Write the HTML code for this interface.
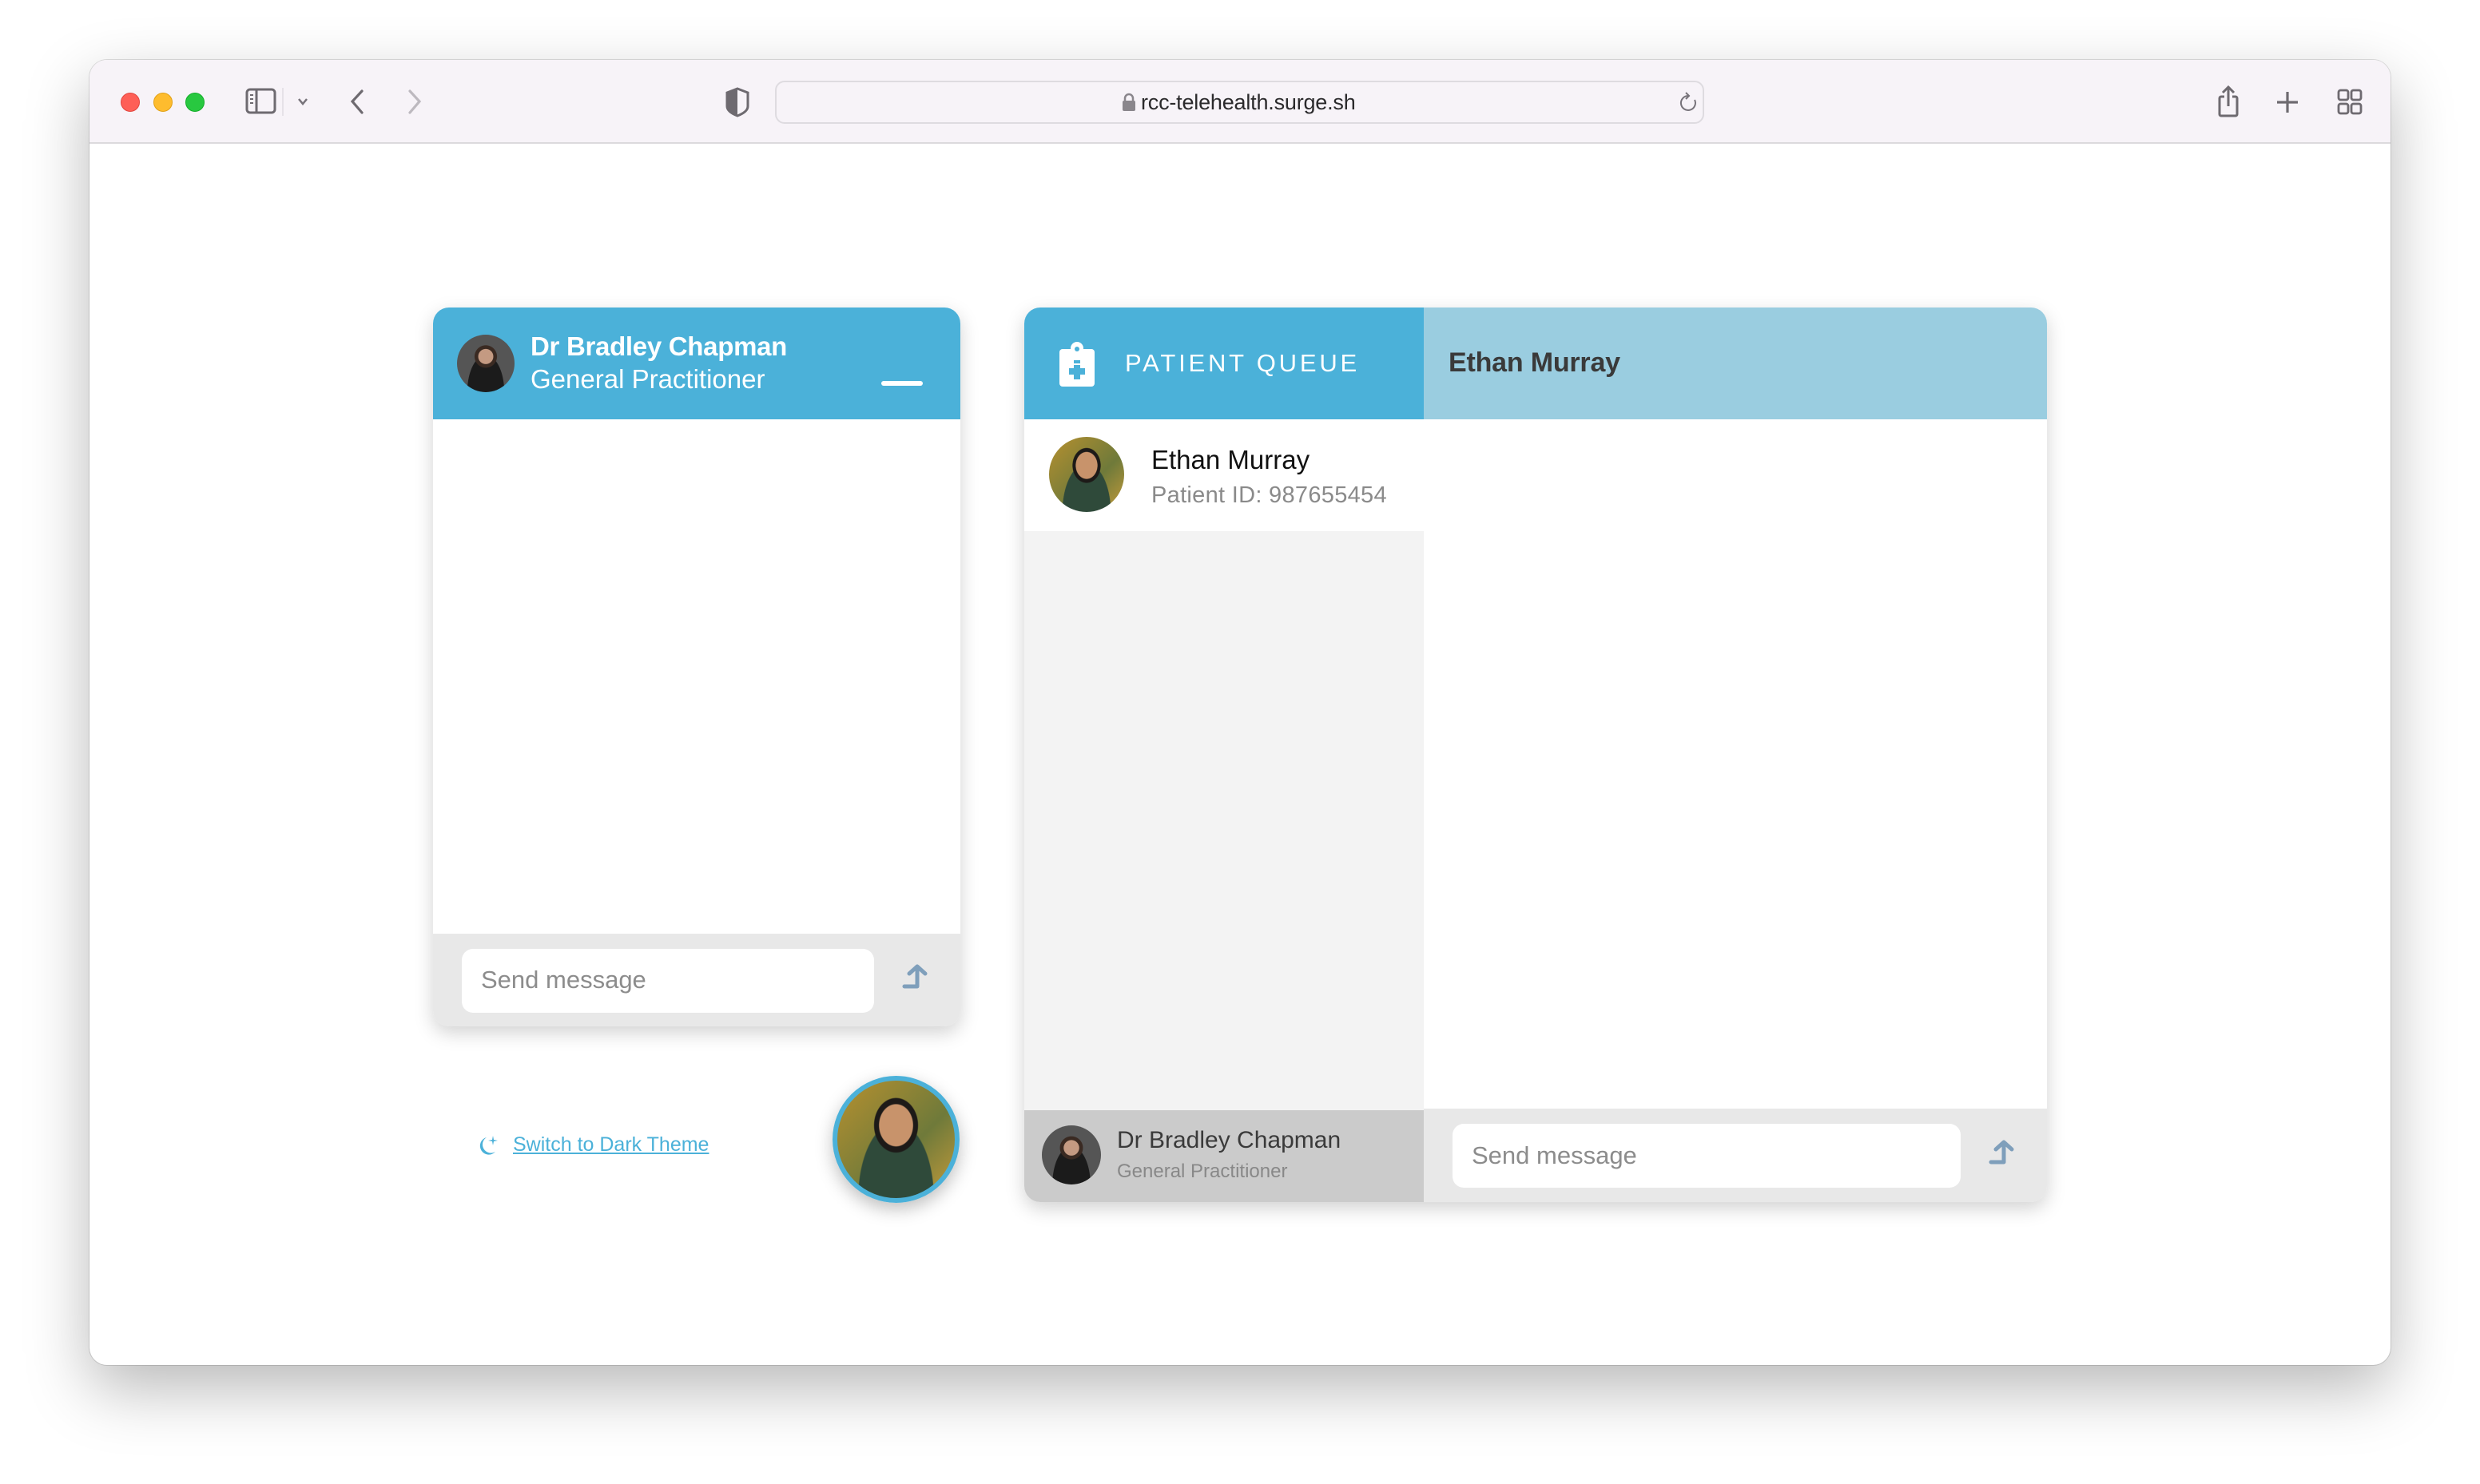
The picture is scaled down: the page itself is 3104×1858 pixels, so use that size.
<!DOCTYPE html>
<html><head><meta charset="utf-8"><style>
*{box-sizing:border-box;margin:0;padding:0}
body{width:3104px;height:1858px;background:#fff;position:relative;overflow:hidden;font-family:"Liberation Sans",sans-serif}
.win{position:absolute;left:112px;top:75px;width:2880px;height:1634px;border-radius:22px;background:#fff;box-shadow:0 30px 80px rgba(0,0,0,.28),0 0 0 1px rgba(0,0,0,.12);overflow:hidden}
.bar{position:absolute;left:0;top:0;width:100%;height:105px;background:#f7f3f8;border-bottom:2px solid #dcdadd}
.abs{position:absolute}
.dot{position:absolute;width:24px;height:24px;border-radius:50%;top:41px}
.url{position:absolute;left:858px;top:26px;width:1163px;height:54px;border:2px solid #dedbe0;border-radius:12px;background:#f7f3f8}
.card{position:absolute;background:#fff;border-radius:20px;overflow:hidden;box-shadow:0 8px 24px rgba(0,0,0,.18)}
.av{position:absolute;border-radius:50%}
.doc{background:radial-gradient(circle at 50% 38%,#c49a82 0 16%,#3a2a22 17% 24%,transparent 25%),radial-gradient(ellipse at 50% 100%,#1b1b1b 0 45%,transparent 46%),#555}
.eth{background:radial-gradient(ellipse at 50% 38%,#c8936b 0 20%,#1d1a18 21% 26%,transparent 27%),radial-gradient(ellipse at 50% 100%,#2f4a3a 0 45%,transparent 46%),linear-gradient(135deg,#b6902f,#6f7a3a 60%,#c59b3a)}
</style></head><body>
<div class="win">
 <div class="bar">
  <div class="dot" style="left:39px;background:#fe5f57;border:1px solid #e2463f"></div>
  <div class="dot" style="left:80px;background:#febc2e;border:1px solid #e1a116"></div>
  <div class="dot" style="left:120px;background:#28c840;border:1px solid #14ae2a"></div>
  <svg class="abs" style="left:190px;top:30px" width="260" height="46" viewBox="0 0 260 46">
   <rect x="7" y="7" width="35" height="29" rx="4" fill="none" stroke="#6e6a70" stroke-width="3"/>
   <line x1="19" y1="7" x2="19" y2="36" stroke="#6e6a70" stroke-width="3"/>
   <line x1="11" y1="14" x2="15" y2="14" stroke="#6e6a70" stroke-width="2"/><line x1="11" y1="19" x2="15" y2="19" stroke="#6e6a70" stroke-width="2"/><line x1="11" y1="24" x2="15" y2="24" stroke="#6e6a70" stroke-width="2"/>
   <line x1="52" y1="5" x2="52" y2="40" stroke="#e0dde2" stroke-width="1.5"/>
   <polyline points="72,19 77,25 82,19" fill="none" stroke="#77737a" stroke-width="2.5"/>
   <polyline points="151,9 139,22 151,36" fill="none" stroke="#6e6a70" stroke-width="3.2" stroke-linecap="round"/>
   <polyline points="211,9 223,22 211,36" fill="none" stroke="#bdb9bf" stroke-width="3.2" stroke-linecap="round"/>
  </svg>
  <svg class="abs" style="left:795px;top:34px" width="32" height="38" viewBox="0 0 32 38">
   <path d="M16 2 L29 7 V24 Q29 31 16 36 Q3 31 3 24 V7 Z" fill="none" stroke="#6e6a70" stroke-width="3"/>
   <path d="M16 2 L3 7 V24 Q3 31 16 36 Z" fill="#6e6a70"/>
  </svg>
  <div class="url">
   <svg class="abs" style="left:432px;top:13px" width="18" height="24" viewBox="0 0 18 24"><path d="M4 10 V7 a5 5 0 0 1 10 0 V10" fill="none" stroke="#8a868c" stroke-width="2.5"/><rect x="1" y="10" width="16" height="13" rx="2" fill="#8a868c"/></svg>
   <div class="abs" style="left:456px;top:10px;font-size:27px;color:#2b2a2c;letter-spacing:-.2px">rcc-telehealth.surge.sh</div>
   <svg class="abs" style="left:1128px;top:11px" width="26" height="28" viewBox="0 0 26 28"><path d="M13 6 A9 9 0 1 0 21 11" fill="none" stroke="#77737a" stroke-width="2"/><polyline points="10,2 14,6 10,10" fill="none" stroke="#77737a" stroke-width="2"/></svg>
  </div>
  <svg class="abs" style="left:2660px;top:30px" width="200" height="46" viewBox="0 0 200 46">
   <path d="M12 16 H8 a2 2 0 0 0-2 2 V38 a2 2 0 0 0 2 2 H26 a2 2 0 0 0 2-2 V18 a2 2 0 0 0-2-2 H22" fill="none" stroke="#6e6a70" stroke-width="3"/>
   <line x1="17" y1="4" x2="17" y2="28" stroke="#6e6a70" stroke-width="3"/><polyline points="10,11 17,4 24,11" fill="none" stroke="#6e6a70" stroke-width="3"/>
   <line x1="91" y1="10" x2="91" y2="36" stroke="#6e6a70" stroke-width="3.2"/><line x1="78" y1="23" x2="104" y2="23" stroke="#6e6a70" stroke-width="3.2"/>
   <rect x="155" y="8" width="12" height="12" rx="2.5" fill="none" stroke="#6e6a70" stroke-width="2.8"/><rect x="171" y="8" width="12" height="12" rx="2.5" fill="none" stroke="#6e6a70" stroke-width="2.8"/>
   <rect x="155" y="25" width="12" height="12" rx="2.5" fill="none" stroke="#6e6a70" stroke-width="2.8"/><rect x="171" y="25" width="12" height="12" rx="2.5" fill="none" stroke="#6e6a70" stroke-width="2.8"/>
  </svg>
 </div>
</div>

<div class="card" style="left:542px;top:385px;width:660px;height:900px">
 <div class="abs" style="left:0;top:0;width:660px;height:140px;background:#4bb1d9"></div>
 <div class="av doc" style="left:30px;top:34px;width:72px;height:72px"></div>
 <div class="abs" style="left:122px;top:30px;color:#fff;font-size:33px;font-weight:bold;letter-spacing:-.3px">Dr Bradley Chapman</div>
 <div class="abs" style="left:122px;top:71px;color:#fff;font-size:33px">General Practitioner</div>
 <div class="abs" style="left:561px;top:92px;width:52px;height:6px;background:#fff;border-radius:3px"></div>
 <div class="abs" style="left:0;top:784px;width:660px;height:116px;background:#e8e8e8"></div>
 <div class="abs" style="left:36px;top:803px;width:516px;height:80px;background:#fff;border-radius:14px"></div>
 <div class="abs" style="left:60px;top:824px;font-size:31px;color:#8c8c8c">Send message</div>
 <svg class="abs" style="left:584px;top:820px" width="44" height="40" viewBox="0 0 44 40"><path d="M6 30 H22 V6 M12 14 L22 5 L32 14" fill="none" stroke="#7f9fbb" stroke-width="5" stroke-linecap="round" stroke-linejoin="round"/></svg>
</div>

<svg class="abs" style="left:596px;top:1420px" width="30" height="30" viewBox="0 0 30 30"><path d="M13 4 A11 11 0 1 0 24 22 A9 9 0 0 1 13 4Z" fill="#4bb1d9"/><path d="M21 2 L22 7 L27 8 L22 9 L21 14 L20 9 L15 8 L20 7Z" fill="#4bb1d9"/></svg>
<div class="abs" style="left:642px;top:1419px;font-size:25px;color:#4bb1d9;text-decoration:underline">Switch to Dark Theme</div>
<div class="av eth" style="left:1042px;top:1347px;width:159px;height:159px;border:6px solid #4bb1d9;box-shadow:0 8px 22px rgba(0,0,0,.25)"></div>

<div class="card" style="left:1282px;top:385px;width:1280px;height:1120px">
 <div class="abs" style="left:0;top:0;width:500px;height:140px;background:#4bb1d9"></div>
 <div class="abs" style="left:500px;top:0;width:780px;height:140px;background:#9acde0"></div>
 <svg class="abs" style="left:43px;top:42px" width="46" height="58" viewBox="0 0 46 58"><rect x="1" y="10" width="44" height="47" rx="4" fill="#fff"/><circle cx="23" cy="9" r="8" fill="#fff"/><circle cx="23" cy="10" r="3" fill="#4bb1d9"/><path d="M19 30 h8 v-6 h-8z M13 34 h20 v8 h-20z M19 28 h8 v20 h-8z" fill="#4bb1d9"/></svg>
 <div class="abs" style="left:126px;top:52px;font-size:31px;color:#fff;letter-spacing:3.8px">PATIENT QUEUE</div>
 <div class="abs" style="left:531px;top:50px;font-size:34px;color:#3a3a3a;font-weight:bold;letter-spacing:-.2px">Ethan Murray</div>
 <div class="abs" style="left:0;top:140px;width:500px;height:140px;background:#fff"></div>
 <div class="abs" style="left:0;top:280px;width:500px;height:725px;background:#f3f3f3"></div>
 <div class="av eth" style="left:31px;top:162px;width:94px;height:94px"></div>
 <div class="abs" style="left:159px;top:172px;font-size:33px;color:#111">Ethan Murray</div>
 <div class="abs" style="left:159px;top:219px;font-size:29px;color:#8a8a8a;letter-spacing:.3px">Patient ID: 987655454</div>
 <div class="abs" style="left:0;top:1005px;width:500px;height:115px;background:#cbcbcb"></div>
 <div class="av doc" style="left:22px;top:1024px;width:74px;height:74px"></div>
 <div class="abs" style="left:116px;top:1026px;font-size:30px;color:#3a3a3a">Dr Bradley Chapman</div>
 <div class="abs" style="left:116px;top:1068px;font-size:24px;color:#888">General Practitioner</div>
 <div class="abs" style="left:500px;top:1003px;width:780px;height:117px;background:#e8e8e8"></div>
 <div class="abs" style="left:536px;top:1022px;width:636px;height:80px;background:#fff;border-radius:14px"></div>
 <div class="abs" style="left:560px;top:1044px;font-size:31px;color:#8c8c8c">Send message</div>
 <svg class="abs" style="left:1204px;top:1038px" width="44" height="40" viewBox="0 0 44 40"><path d="M6 32 H22 V8 M12 16 L22 7 L32 16" fill="none" stroke="#7f9fbb" stroke-width="5" stroke-linecap="round" stroke-linejoin="round"/></svg>
</div>
</body></html>
